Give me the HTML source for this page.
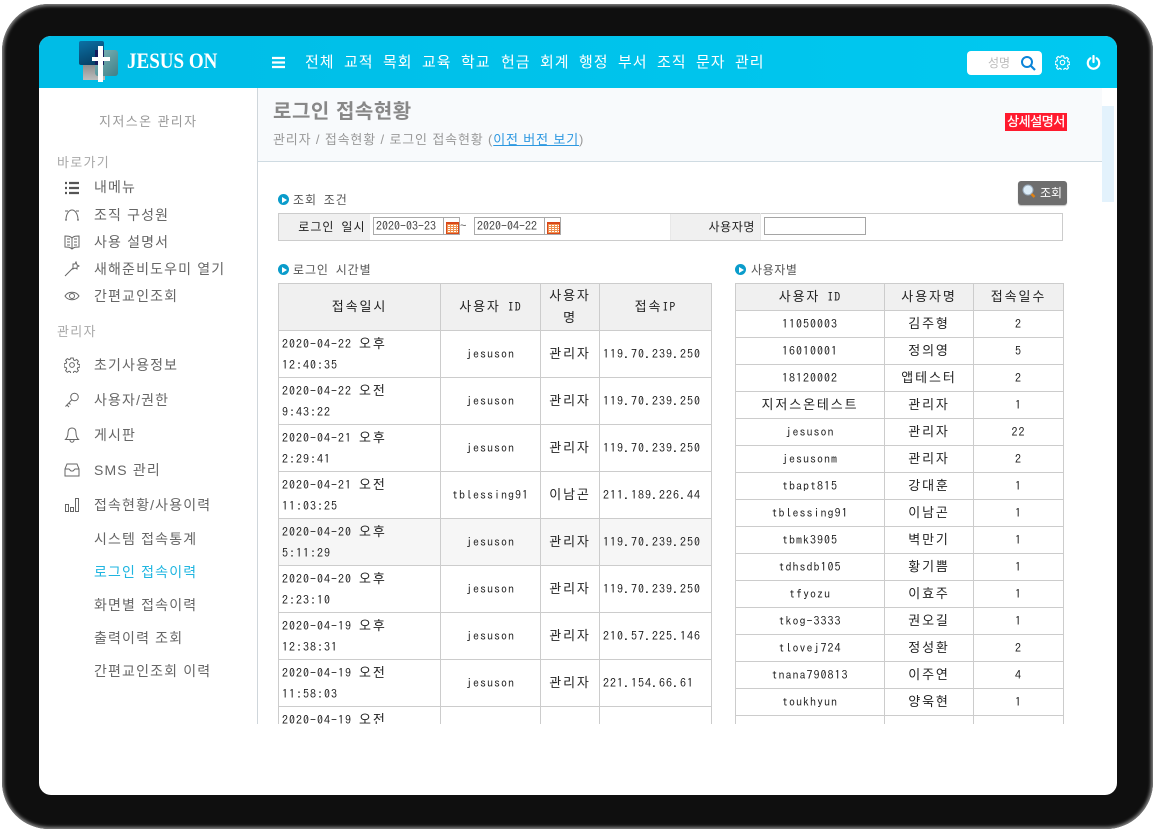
<!DOCTYPE html>
<html lang="ko"><head><meta charset="utf-8"><title>로그인 접속현황</title>
<style>
*{box-sizing:border-box}
html,body{margin:0;padding:0;width:1155px;height:832px;overflow:hidden;background:#fff;font-family:"Liberation Sans","Noto Sans CJK KR",sans-serif}
.a{position:absolute;white-space:nowrap}
#bezel{left:2px;top:4px;width:1151px;height:825px;background:#0f0f0f;border-radius:47px;box-shadow:inset 0 0 3px 2px #858585}
#screen{left:39px;top:36px;width:1078px;height:759px;background:#fff;border-radius:12px;overflow:hidden}
#hdr{left:39px;top:36px;width:1078px;height:52px;background:linear-gradient(90deg,#00bce6,#00c9f0);border-radius:12px 12px 0 0}
.nav{top:53px;color:#fff;font-size:15px;line-height:20px;letter-spacing:.9px}
.side{color:#666;font-size:14px;line-height:18px;letter-spacing:1.15px}
.sec{color:#a8a8a8;font-size:13px;line-height:18px;letter-spacing:1.3px}
.ic{left:64px;width:16px;height:16px;fill:none;stroke:#666;stroke-width:1}
.bul{width:11px;height:11px;border-radius:50%;background:#0a9ccb}
.bul:after{content:"";position:absolute;left:4px;top:2.5px;border-left:5px solid #fff;border-top:3px solid transparent;border-bottom:3px solid transparent}
.lbl{color:#555;font-size:12px;line-height:16px;letter-spacing:.9px;font-family:"IPAGothic","Noto Sans CJK KR",sans-serif}
table{border-collapse:collapse;table-layout:fixed;position:absolute;background:#fff}
td,th{border:1px solid #ccc;padding:0;font-weight:normal;text-align:center;font-family:"IPAGothic","Noto Sans CJK KR",monospace;color:#222;font-size:12px;letter-spacing:1px;line-height:20px;overflow:hidden}
th{background:#f0f0f0}
.k,td.k,th.k{font-size:13px;letter-spacing:1.9px}
#tl tr{height:47px}
#tr tr{height:27px}
#tl td:first-child{text-align:left;padding-left:3px;line-height:21px}
#tl td:last-child{text-align:left;padding-left:3px}
.date{height:18px;border:1px solid #aaa;background:#fff;font-size:12px;color:#444;font-family:"IPAGothic",monospace;line-height:16px;padding-left:2px;letter-spacing:0}
.cal{width:17px;height:18px;border:1px solid #aaa;background:#fff}
.cal:after{content:"";position:absolute;left:2px;top:4px;width:11px;height:9px;background-color:#fff;background-image:linear-gradient(#f0914f 1px,transparent 1px),linear-gradient(90deg,#f0914f 1px,transparent 1px);background-size:3px 2px;border:1px solid #d9481a;border-top-width:2px}
</style></head><body>
<div class="a" id="bezel"></div>
<div class="a" id="screen"></div>
<div class="a" id="hdr"></div>

<!-- logo -->
<div class="a" style="left:79px;top:41px;width:25px;height:24px;background:linear-gradient(160deg,#0b72a6,#06385c);border-radius:2px"></div>
<div class="a" style="left:83px;top:65px;width:22px;height:15px;background:linear-gradient(#8e8e8e,#bdbdbd)"></div>
<div class="a" style="left:95px;top:50px;width:23px;height:26px;background:linear-gradient(135deg,#7fb7b9,#3f7f88);border-radius:3px"></div>
<div class="a" style="left:95px;top:50px;width:9px;height:15px;background:#161a5c"></div>
<div class="a" style="left:98px;top:46px;width:5px;height:36px;background:#fff"></div>
<div class="a" style="left:92px;top:57px;width:18px;height:4px;background:#fff"></div>
<div class="a" style="left:127px;top:47px;color:#fff;font:bold 22px/28px 'Liberation Serif',serif;transform:scaleX(.865);transform-origin:0 0">JESUS ON</div>

<svg class="a" style="left:272px;top:56px" width="14" height="13"><path d="M0 2h13M0 6.5h13M0 11h13" stroke="#fff" stroke-width="2.2"/></svg>
<div class="a nav" style="left:305px">전체</div><div class="a nav" style="left:344px">교적</div><div class="a nav" style="left:383px">목회</div><div class="a nav" style="left:422px">교육</div><div class="a nav" style="left:461px">학교</div><div class="a nav" style="left:501px">헌금</div><div class="a nav" style="left:540px">회계</div><div class="a nav" style="left:579px">행정</div><div class="a nav" style="left:618px">부서</div><div class="a nav" style="left:657px">조직</div><div class="a nav" style="left:696px">문자</div><div class="a nav" style="left:735px">관리</div>

<div class="a" style="left:967px;top:51px;width:75px;height:24px;background:#fff;border-radius:4px"></div>
<div class="a" style="left:988px;top:54px;color:#bbb;font-size:12px;line-height:18px">성명</div>
<svg class="a" style="left:1020px;top:55px" width="16" height="16"><circle cx="7" cy="7" r="5" fill="none" stroke="#0b84d8" stroke-width="2"/><path d="M10.5 10.500L15 15" stroke="#0b84d8" stroke-width="2.200"/></svg>
<svg class="a" style="left:1055px;top:55px" width="15" height="15" viewBox="0 0 16 16"><g fill="none" stroke="#fff" stroke-width="1.200"><circle cx="8" cy="8" r="2.400"/><path d="M6.800 1h2.400l.4 2 1.300.6 1.800-1.100 1.700 1.700-1.100 1.800.6 1.300 2 .4v2.400l-2 .4-.6 1.300 1.100 1.800-1.700 1.700-1.800-1.100-1.300.6-.4 2H6.800l-.4-2-1.300-.6-1.800 1.100-1.700-1.700 1.100-1.800-.6-1.300-2-.4V6.800l2-.4.6-1.300-1.100-1.800 1.700-1.700 1.800 1.100 1.300-.6z"/></g></svg>
<svg class="a" style="left:1086px;top:55px" width="15" height="15" viewBox="0 0 15 15"><path d="M7.500 1v6" stroke="#fff" stroke-width="2.200" stroke-linecap="round"/><path d="M4.300 3.300a5.700 5.700 0 1 0 6.400 0" fill="none" stroke="#fff" stroke-width="2.200" stroke-linecap="round"/></svg>

<!-- sidebar -->
<div class="a" style="left:257px;top:88px;width:1px;height:636px;background:#cfd6db"></div>
<div class="a" style="left:99px;top:113px;color:#999;font-size:13px;line-height:18px;letter-spacing:1.4px">지저스온 관리자</div>
<div class="a sec" style="left:57px;top:154px">바로가기</div>
<div class="a side" style="left:94px;top:178px">내메뉴</div>
<div class="a side" style="left:94px;top:206px">조직 구성원</div>
<div class="a side" style="left:94px;top:233px">사용 설명서</div>
<div class="a side" style="left:94px;top:260px">새해준비도우미 열기</div>
<div class="a side" style="left:94px;top:287px">간편교인조회</div>
<div class="a sec" style="left:57px;top:323px">관리자</div>
<div class="a side" style="left:94px;top:356px">초기사용정보</div>
<div class="a side" style="left:94px;top:391px">사용자/권한</div>
<div class="a side" style="left:94px;top:426px">게시판</div>
<div class="a side" style="left:94px;top:461px">SMS 관리</div>
<div class="a side" style="left:94px;top:496px">접속현황/사용이력</div>
<div class="a side" style="left:94px;top:530px">시스템 접속통계</div>
<div class="a side" style="left:94px;top:563px;color:#1fb5e0">로그인 접속이력</div>
<div class="a side" style="left:94px;top:596px">화면별 접속이력</div>
<div class="a side" style="left:94px;top:629px">출력이력 조회</div>
<div class="a side" style="left:94px;top:662px">간편교인조회 이력</div>

<svg class="a ic" style="top:180px" viewBox="0 0 16 16"><path d="M1 3h2M5 3h10M1 8h2M5 8h10M1 13h2M5 13h10" stroke-width="2.200" stroke="#555"/></svg>
<svg class="a ic" style="top:207px" viewBox="0 0 16 16"><path d="M2 13C2 7 5 3 8 3s6 4 6 10M1 4h3M12 4h3M1 13h2M13 13h2"/></svg>
<svg class="a ic" style="top:234px" viewBox="0 0 16 16"><path d="M1 2c3 0 5 0 7 2 2-2 4-2 7-2v11c-3 0-5 0-7 2-2-2-4-2-7-2zM8 4v11M3 5h3M3 8h3M3 11h3M10 5h3M10 8h3M10 11h3"/></svg>
<svg class="a ic" style="top:261px" viewBox="0 0 16 16"><path d="M1 15L9 7M9 3l2 0 1-2 1 3 2 1-2 1 0 2-2-1-2 1 0-2z"/></svg>
<svg class="a ic" style="top:288px" viewBox="0 0 16 16"><path d="M1 8c3-5 11-5 14 0-3 5-11 5-14 0z"/><circle cx="8" cy="8" r="2.500"/></svg>
<svg class="a ic" style="top:357px" viewBox="0 0 16 16"><circle cx="8" cy="8" r="2.400"/><path d="M6.800 1h2.400l.4 2 1.300.6 1.800-1.100 1.700 1.700-1.100 1.800.6 1.300 2 .4v2.400l-2 .4-.6 1.300 1.100 1.800-1.700 1.700-1.800-1.100-1.300.6-.4 2H6.800l-.4-2-1.300-.6-1.800 1.100-1.700-1.700 1.100-1.800-.6-1.300-2-.4V6.800l2-.4.6-1.300-1.100-1.800 1.700-1.700 1.800 1.100 1.300-.6z"/></svg>
<svg class="a ic" style="top:392px" viewBox="0 0 16 16"><circle cx="10.500" cy="5" r="3.800"/><path d="M7.800 7.800L1.500 14.500M3 13l2 2M5 11l1.500 1.500"/></svg>
<svg class="a ic" style="top:427px" viewBox="0 0 16 16"><path d="M8 1c-3 0-4 2-4 5 0 3-1 5-2.500 6.500h13C13 11 12 9 12 6c0-3-1-5-4-5zM6 13c0 3 4 3 4 0"/></svg>
<svg class="a ic" style="top:462px" viewBox="0 0 16 16"><path d="M3 2h10l2 5v7H1V7zM1 7h4l2 2h2l2-2h4"/></svg>
<svg class="a ic" style="top:497px" viewBox="0 0 16 16"><path d="M1.500 7.500h3v7h-3zM6.500 10.500h3v4h-3zM11.500 1.500h3v13h-3z"/></svg>

<!-- title bar -->
<div class="a" style="left:258px;top:88px;width:844px;height:74px;background:#f8fafc;border-bottom:1px solid #cfdbe2"></div>
<div class="a" style="left:273px;top:99px;color:#888;font-size:20px;font-weight:bold;line-height:26px;letter-spacing:.55px">로그인 접속현황</div>
<div class="a" style="left:273px;top:131px;color:#999;font-size:13px;line-height:18px;letter-spacing:.85px">관리자 / 접속현황 / 로그인 접속현황 (<span style="color:#2d98e0;text-decoration:underline">이전 버전 보기</span>)</div>
<div class="a" style="left:1005px;top:113px;width:62px;height:18px;background:#ff1a2e;color:#fff;font-size:13px;line-height:18px;text-align:center;letter-spacing:-.4px;-webkit-text-stroke:.25px #fff">상세설명서</div>
<div class="a" style="left:1102px;top:106px;width:12px;height:96px;background:#e3f2fc"></div>

<!-- search -->
<div class="a" style="left:1018px;top:181px;width:49px;height:24px;background:#6e6e6e;border-radius:3px;box-shadow:0 1px 1px #bbb"></div>
<svg class="a" style="left:1022px;top:184px" width="14" height="15"><circle cx="6" cy="6" r="5" fill="#dcecf7" stroke="#9ab"/><path d="M9.500 10l3 3" stroke="#e08214" stroke-width="2.500"/></svg>
<div class="a" style="left:1040px;top:185px;color:#fff;font:12px/16px 'IPAGothic',sans-serif">조회</div>
<div class="a bul" style="left:278px;top:194px"></div>
<div class="a lbl" style="left:293px;top:192px">조회 조건</div>

<table style="left:278px;top:213px;width:785px">
<colgroup><col style="width:91px"><col style="width:301px"><col style="width:90px"><col></colgroup>
<tr style="height:27px"><th style="border-right:0;text-align:right;padding-right:4px">로그인 일시</th><td style="border-left:0;border-right:0"></td><th style="border-left-color:#e8e8e8;border-right-color:#e8e8e8;text-align:right;padding-right:5px;letter-spacing:.6px">사용자명</th><td style="border-left:1px solid #e8e8e8"></td></tr>
</table>
<div class="a date" style="left:373px;top:217px;width:71px">2020-03-23</div><div class="a cal" style="left:443px;top:217px"></div>
<div class="a" style="left:460px;top:219px;font-size:11px;line-height:14px;color:#555">~</div>
<div class="a date" style="left:474px;top:217px;width:71px">2020-04-22</div><div class="a cal" style="left:544px;top:217px"></div>
<div class="a" style="left:764px;top:217px;width:102px;height:18px;border:1px solid #a5a5a5;background:#fff"></div>

<div class="a bul" style="left:278px;top:264px"></div>
<div class="a lbl" style="left:293px;top:262px">로그인 시간별</div>
<div class="a bul" style="left:735px;top:264px"></div>
<div class="a lbl" style="left:751px;top:262px;letter-spacing:.6px">사용자별</div>

<!-- tables clipped at y=724 -->
<div class="a" style="left:0;top:0;width:1155px;height:724px;overflow:hidden;white-space:normal">
<table id="tl" style="left:278px;top:283px;width:434px">
<colgroup><col style="width:162px"><col style="width:100px"><col style="width:59px"><col></colgroup>
<tr><th class="k">접속일시</th><th><span class="k">사용자</span> ID</th><th class="k" style="line-height:22px">사용자<br>명</th><th style="text-align:center"><span class="k">접속</span>IP</th></tr>
<tr><td>2020-04-22 <span class="k">오후</span><br>12:40:35</td><td>jesuson</td><td class="k">관리자</td><td>119.70.239.250</td></tr>
<tr><td>2020-04-22 <span class="k">오전</span><br>9:43:22</td><td>jesuson</td><td class="k">관리자</td><td>119.70.239.250</td></tr>
<tr><td>2020-04-21 <span class="k">오후</span><br>2:29:41</td><td>jesuson</td><td class="k">관리자</td><td>119.70.239.250</td></tr>
<tr><td>2020-04-21 <span class="k">오전</span><br>11:03:25</td><td>tblessing91</td><td class="k">이남곤</td><td>211.189.226.44</td></tr>
<tr style="background:#f6f6f6"><td>2020-04-20 <span class="k">오후</span><br>5:11:29</td><td>jesuson</td><td class="k">관리자</td><td>119.70.239.250</td></tr>
<tr><td>2020-04-20 <span class="k">오후</span><br>2:23:10</td><td>jesuson</td><td class="k">관리자</td><td>119.70.239.250</td></tr>
<tr><td>2020-04-19 <span class="k">오후</span><br>12:38:31</td><td>jesuson</td><td class="k">관리자</td><td>210.57.225.146</td></tr>
<tr><td>2020-04-19 <span class="k">오전</span><br>11:58:03</td><td>jesuson</td><td class="k">관리자</td><td>221.154.66.61</td></tr>
<tr><td>2020-04-19 <span class="k">오전</span><br>11:20:10</td><td></td><td></td><td></td></tr>
</table>
<table id="tr" style="left:735px;top:283px;width:329px">
<colgroup><col style="width:149px"><col style="width:89px"><col></colgroup>
<tr><th><span class="k">사용자</span> ID</th><th class="k">사용자명</th><th class="k">접속일수</th></tr>
<tr><td>11050003</td><td class="k">김주형</td><td>2</td></tr>
<tr><td>16010001</td><td class="k">정의영</td><td>5</td></tr>
<tr><td>18120002</td><td class="k">앱테스터</td><td>2</td></tr>
<tr><td class="k">지저스온테스트</td><td class="k">관리자</td><td>1</td></tr>
<tr><td>jesuson</td><td class="k">관리자</td><td>22</td></tr>
<tr><td>jesusonm</td><td class="k">관리자</td><td>2</td></tr>
<tr><td>tbapt815</td><td class="k">강대훈</td><td>1</td></tr>
<tr><td>tblessing91</td><td class="k">이남곤</td><td>1</td></tr>
<tr><td>tbmk3905</td><td class="k">벽만기</td><td>1</td></tr>
<tr><td>tdhsdb105</td><td class="k">황기쁨</td><td>1</td></tr>
<tr><td>tfyozu</td><td class="k">이효주</td><td>1</td></tr>
<tr><td>tkog-3333</td><td class="k">권오길</td><td>1</td></tr>
<tr><td>tlovej724</td><td class="k">정성환</td><td>2</td></tr>
<tr><td>tnana790813</td><td class="k">이주연</td><td>4</td></tr>
<tr><td>toukhyun</td><td class="k">양욱현</td><td>1</td></tr>
<tr><td></td><td></td><td></td></tr>
</table>
</div>
</body></html>
